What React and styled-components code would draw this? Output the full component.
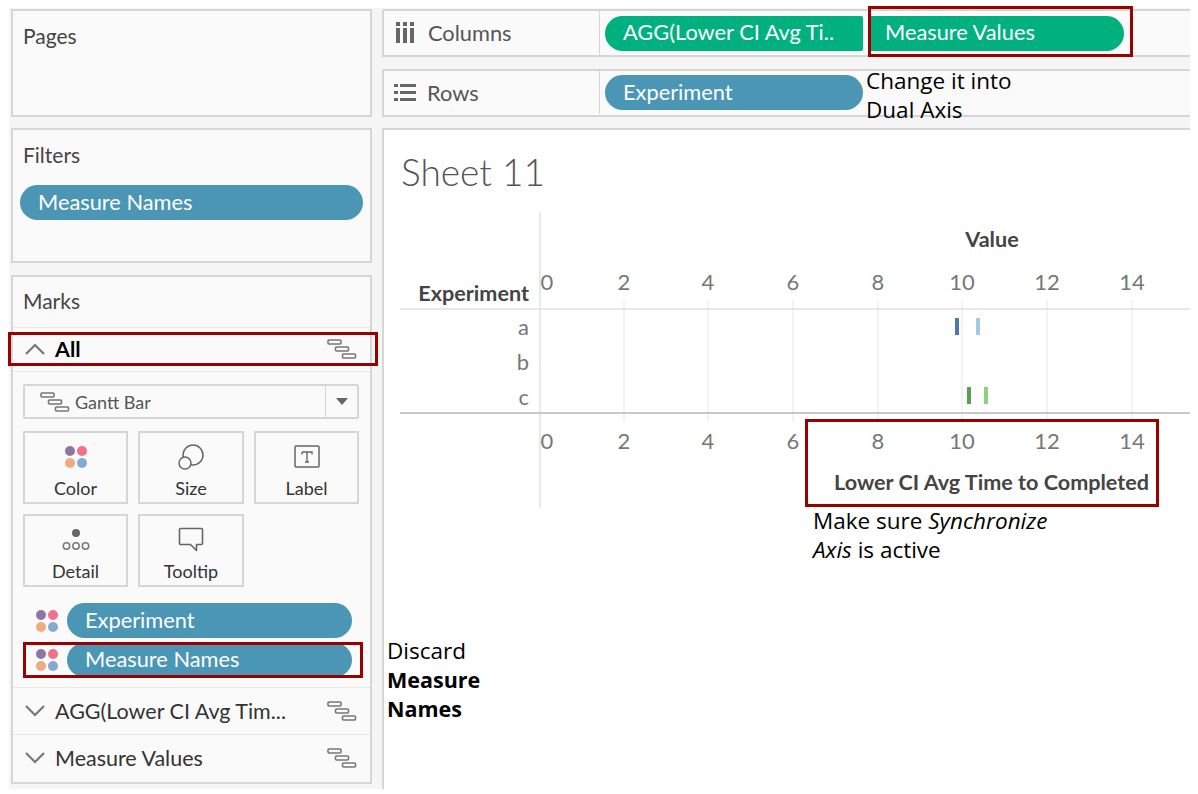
import styled, { createGlobalStyle } from 'styled-components';

const Global = createGlobalStyle`
  html, body { margin: 0; padding: 0; background: #fff; }
  body { font-family: Lato, "Open Sans", sans-serif; }
`;

const Page = styled.div`
  position: relative;
  width: 1198px;
  height: 794px;
  overflow: hidden;
  padding: 8px 8px 5px 9px;
  box-sizing: border-box;
`;

const Shell = styled.div`
  display: grid;
  grid-template-columns: 373px 1fr;
  height: 100%;
  background: #f5f5f5;
`;

const Side = styled.div`
  display: flex;
  flex-direction: column;
  padding: 1px 10px 0 2px;
`;

const Panel = styled.section`
  box-sizing: border-box;
  height: ${p => p.$h}px;
  margin-bottom: ${p => p.$mb || 0}px;
  background: #fafafa;
  border: 2px solid #d6d6d6;
`;

const PanelTitle = styled.div`
  padding: ${p => p.$pt}px 0 0 10px;
  font-size: 21px;
  line-height: 26px;
  color: #444;
`;

const Pill = styled.div`
  box-sizing: border-box;
  display: flex;
  align-items: center;
  height: ${p => p.$h || 35}px;
  width: ${p => p.$w}px;
  padding: 0 0 3px ${p => p.$pl || 18}px;
  border-radius: ${p => p.$radius || '18px'};
  background: ${p => p.$bg || '#4a96b4'};
  color: #fff;
  font-size: 21.8px;
  white-space: nowrap;
`;

const FilterPill = styled(Pill)`
  margin: 17px 0 0 7px;
`;

const MarkRow = styled.div`
  box-sizing: border-box;
  display: flex;
  align-items: center;
  height: ${p => p.$h}px;
  margin-top: ${p => p.$mt || 0}px;
  padding: 0 13px ${p => p.$pb || 0}px 11px;
  border-top: 1px solid #e8e8e8;
  font-size: 21.5px;
  font-weight: ${p => (p.$bold ? 700 : 400)};
  color: ${p => (p.$bold ? '#000' : '#333')};
`;

const RowLabel = styled.span`
  flex: 1;
  margin-left: 9px;
  white-space: nowrap;
`;

const MarksBody = styled.div`
  height: 316px;
  border-top: 1px solid #e8e8e8;
  padding: 12px 11px 0 10px;
  box-sizing: border-box;
`;

const Select = styled.div`
  box-sizing: border-box;
  display: flex;
  align-items: center;
  height: 35px;
  width: 336px;
  background: #fafafa;
  border: 2px solid #d6d6d6;
  border-radius: 2px;
  font-size: 18px;
  color: #555;
`;

const SelectLabel = styled.div`
  flex: 1;
  display: flex;
  align-items: center;
  gap: 5px;
  padding-left: 15px;
`;

const SelectArrow = styled.div`
  display: flex;
  align-items: center;
  justify-content: center;
  width: 31px;
  height: 100%;
  border-left: 1px solid #d6d6d6;

  &::after {
    content: '';
    border-left: 6px solid transparent;
    border-right: 6px solid transparent;
    border-top: 7px solid #666;
  }
`;

const CardGrid = styled.div`
  display: grid;
  grid-template-columns: 105px 106px 105px;
  grid-auto-rows: 73px;
  column-gap: 10px;
  row-gap: 10px;
  margin-top: 12px;
`;

const Card = styled.div`
  box-sizing: border-box;
  display: flex;
  flex-direction: column;
  align-items: center;
  padding-top: 9px;
  border: 2px solid #d6d6d6;
  font-size: 18px;
  color: #333;
`;

const CardIcon = styled.div`
  height: 30px;
  margin-bottom: 5px;
  display: flex;
  align-items: center;
`;

const FieldList = styled.div`
  display: flex;
  flex-direction: column;
  gap: 5px;
  margin-top: 16px;
  padding-left: 13px;
`;

const Field = styled.div`
  display: flex;
  align-items: center;
  gap: 9px;
`;

const Main = styled.div`
  display: flex;
  flex-direction: column;
  padding-top: 1px;
`;

const Shelf = styled.div`
  box-sizing: border-box;
  display: flex;
  align-items: center;
  height: 48px;
  margin-bottom: ${p => p.$mb}px;
  padding-bottom: ${p => p.$pb || 0}px;
  background: #fafafa;
  border: 2px solid #d6d6d6;
  border-right: 0;
`;

const ShelfName = styled.div`
  box-sizing: border-box;
  display: flex;
  align-items: center;
  gap: ${p => p.$gap}px;
  width: 216px;
  height: 100%;
  padding-left: ${p => p.$pl}px;
  padding-bottom: 1px;
  border-right: 1px solid #d6d6d6;
  font-size: 21.8px;
  color: #555;
`;

const ShelfPills = styled.div`
  display: flex;
  gap: 5px;
  padding-left: 5px;
`;

const Sheet = styled.div`
  flex: 1;
  background: #fff;
  border-top: 2px solid #d6d6d6;
  border-left: 2px solid #d6d6d6;
`;

const SheetTitle = styled.h1`
  height: 82px;
  margin: 0;
  padding: 20px 0 0 17px;
  box-sizing: border-box;
  font-size: 37px;
  line-height: 44px;
  font-weight: 300;
  color: #555;
`;

const ChartSvg = styled.svg`
  display: block;
  font-family: Lato, "Open Sans", sans-serif;
`;

const Tick = styled.text`
  font-size: 22px;
  fill: #777;
  text-anchor: ${p => p.$anchor || 'middle'};
`;

const AxisTitle = styled.text`
  font-size: 21.6px;
  font-weight: 700;
  fill: #444;
  text-anchor: ${p => p.$anchor || 'middle'};
`;

const Highlight = styled.div`
  position: absolute;
  box-sizing: border-box;
  left: ${p => p.$x}px;
  top: ${p => p.$y}px;
  width: ${p => p.$w}px;
  height: ${p => p.$h}px;
  border: 3px solid #990000;
  pointer-events: none;
`;

const Note = styled.div`
  position: absolute;
  left: ${p => p.$x}px;
  top: ${p => p.$y}px;
  width: ${p => p.$w}px;
  font-family: "Open Sans", Lato, sans-serif;
  font-size: 22.5px;
  line-height: 29px;
  color: #000;

  strong {
    font-size: 21.5px;
  }
`;

const Chevron = ({ up }) => (
  <svg width="22" height="14" viewBox="0 0 22 14" fill="none" stroke="#777" strokeWidth="2.2">
    <path d={up ? 'M2 12 11 3l9 9' : 'M2 2l9 9 9-9'} />
  </svg>
);

const GanttIcon = () => (
  <svg width="30" height="20" viewBox="0 0 30 20" fill="none" stroke="#777" strokeWidth="1.6">
    <rect x="1" y="1" width="13" height="4" rx="1" />
    <rect x="8.5" y="8" width="13" height="4" rx="1" />
    <rect x="15.5" y="15" width="13" height="4" rx="1" />
  </svg>
);

const ColorDots = ({ size = 22 }) => (
  <svg width={size} height={size} viewBox="0 0 22 22">
    <circle cx="5" cy="5" r="5" fill="#8f76a0" />
    <circle cx="17" cy="5" r="5" fill="#f2708a" />
    <circle cx="5" cy="17" r="5" fill="#f2ab7e" />
    <circle cx="17" cy="17" r="5" fill="#85a9d0" />
  </svg>
);

const SizeIcon = () => (
  <svg width="26" height="26" viewBox="0 0 26 26" fill="none" stroke="#666" strokeWidth="1.5">
    <circle cx="15" cy="11" r="10" />
    <circle cx="7" cy="19" r="6" fill="#fafafa" />
  </svg>
);

const LabelIcon = () => (
  <svg width="26" height="24" viewBox="0 0 26 24" fill="none">
    <rect x="1" y="1" width="24" height="21" rx="1" stroke="#666" strokeWidth="1.5" />
    <path d="M8 7h10v2.5M8 7v2.5M13 7v10M11 17h4" stroke="#666" strokeWidth="1.4" />
  </svg>
);

const DetailIcon = () => (
  <svg width="28" height="24" viewBox="0 0 28 24" fill="none" stroke="#777" strokeWidth="1.5">
    <circle cx="14" cy="5" r="4" fill="#666" stroke="none" />
    <circle cx="4.5" cy="18" r="3.2" />
    <circle cx="14" cy="18" r="3.2" />
    <circle cx="23.5" cy="18" r="3.2" />
  </svg>
);

const TooltipIcon = () => (
  <svg width="26" height="26" viewBox="0 0 26 26" fill="none" stroke="#666" strokeWidth="1.6" strokeLinejoin="round">
    <path d="M2.5 1.5h21a1 1 0 0 1 1 1v14a1 1 0 0 1-1 1h-5v6l-6-6h-10a1 1 0 0 1-1-1v-14a1 1 0 0 1 1-1z" />
  </svg>
);

const ColumnsIcon = () => (
  <svg width="19" height="21" viewBox="0 0 19 21" fill="#666">
    <rect x="0" y="0" width="4" height="4" />
    <rect x="7" y="0" width="4" height="4" />
    <rect x="14" y="0" width="4" height="4" />
    <rect x="0" y="6" width="4" height="15" />
    <rect x="7" y="6" width="4" height="15" />
    <rect x="14" y="6" width="4" height="15" />
  </svg>
);

const RowsIcon = () => (
  <svg width="22" height="17" viewBox="0 0 22 17" fill="#666">
    <rect x="0" y="0" width="4" height="3" />
    <rect x="6" y="0" width="16" height="3" />
    <rect x="0" y="7" width="4" height="3" />
    <rect x="6" y="7" width="16" height="3" />
    <rect x="0" y="14" width="4" height="3" />
    <rect x="6" y="14" width="16" height="3" />
  </svg>
);

const gridX = [624, 708, 793, 878, 962, 1047, 1132];
const tickLabels = [
  { x: 547, label: '0' },
  ...gridX.map((x, i) => ({ x, label: String((i + 1) * 2) })),
];

const bars = [
  { x: 955, y: 318, fill: '#4e79a7' },
  { x: 976, y: 318, fill: '#a0cbe8' },
  { x: 967, y: 387, fill: '#59a14f' },
  { x: 984, y: 387, fill: '#8cd17d' },
];

const Chart = () => (
  <ChartSvg width="806" height="300" viewBox="384 212 806 300">
    {gridX.map(x => (
      <line key={x} x1={x} x2={x} y1="300" y2="422" stroke="#efefef" strokeWidth="1.5" />
    ))}
    <line x1="540" x2="540" y1="212" y2="508" stroke="#e2e2e2" strokeWidth="1.5" />
    <line x1="400" x2="1190" y1="309" y2="309" stroke="#e0e0e0" strokeWidth="1.5" />
    <line x1="400" x2="1190" y1="413" y2="413" stroke="#c8c8c8" strokeWidth="2" />
    <AxisTitle x="992" y="247">Value</AxisTitle>
    <AxisTitle x="529" y="301" $anchor="end">Experiment</AxisTitle>
    {tickLabels.map(t => (
      <Tick key={t.label} x={t.x} y="290">{t.label}</Tick>
    ))}
    {tickLabels.map(t => (
      <Tick key={t.label} x={t.x} y="449">{t.label}</Tick>
    ))}
    <Tick x="529" y="335" $anchor="end">a</Tick>
    <Tick x="529" y="370" $anchor="end">b</Tick>
    <Tick x="529" y="405" $anchor="end">c</Tick>
    {bars.map(b => (
      <rect key={b.x} x={b.x} y={b.y} width="4" height="17" fill={b.fill} />
    ))}
    <AxisTitle x="1149" y="490" $anchor="end">Lower CI Avg Time to Completed</AxisTitle>
  </ChartSvg>
);

const App = () => (
  <Page>
    <Global />
    <Shell>
      <Side>
        <Panel $h={108} $mb={11}>
          <PanelTitle $pt={12}>Pages</PanelTitle>
        </Panel>
        <Panel $h={135} $mb={12}>
          <PanelTitle $pt={12}>Filters</PanelTitle>
          <FilterPill $w={343}>Measure Names</FilterPill>
        </Panel>
        <Panel $h={509}>
          <PanelTitle $pt={11}>Marks</PanelTitle>
          <MarkRow $h={44} $mt={13} $pb={1} $bold>
            <Chevron up />
            <RowLabel>All</RowLabel>
            <GanttIcon />
          </MarkRow>
          <MarksBody>
            <Select>
              <SelectLabel><GanttIcon />Gantt Bar</SelectLabel>
              <SelectArrow />
            </Select>
            <CardGrid>
              <Card><CardIcon><ColorDots /></CardIcon>Color</Card>
              <Card><CardIcon><SizeIcon /></CardIcon>Size</Card>
              <Card><CardIcon><LabelIcon /></CardIcon>Label</Card>
              <Card><CardIcon><DetailIcon /></CardIcon>Detail</Card>
              <Card><CardIcon><TooltipIcon /></CardIcon>Tooltip</Card>
            </CardGrid>
            <FieldList>
              <Field><ColorDots /><Pill $w={285}>Experiment</Pill></Field>
              <Field><ColorDots /><Pill $w={285} $h={34}>Measure Names</Pill></Field>
            </FieldList>
          </MarksBody>
          <MarkRow $h={47}>
            <Chevron />
            <RowLabel>AGG(Lower CI Avg Tim...</RowLabel>
            <GanttIcon />
          </MarkRow>
          <MarkRow $h={47}>
            <Chevron />
            <RowLabel>Measure Values</RowLabel>
            <GanttIcon />
          </MarkRow>
        </Panel>
      </Side>
      <Main>
        <Shelf $mb={12}>
          <ShelfName $pl={12} $gap={13}><ColumnsIcon />Columns</ShelfName>
          <ShelfPills>
            <Pill $w={258} $bg="#00b180" $radius="18px 2px 2px 18px">AGG(Lower CI Avg Ti..</Pill>
            <Pill $w={256} $bg="#00b180" $pl={17} $radius="2px 18px 18px 2px">Measure Values</Pill>
          </ShelfPills>
        </Shelf>
        <Shelf $mb={11} $pb={1}>
          <ShelfName $pl={10} $gap={11}><RowsIcon />Rows</ShelfName>
          <ShelfPills>
            <Pill $w={258}>Experiment</Pill>
          </ShelfPills>
        </Shelf>
        <Sheet>
          <SheetTitle>Sheet 11</SheetTitle>
          <Chart />
        </Sheet>
      </Main>
    </Shell>

    <Highlight $x={868} $y={6} $w={265} $h={51} />
    <Highlight $x={8} $y={332} $w={370} $h={34} />
    <Highlight $x={23} $y={642} $w={340} $h={36} />
    <Highlight $x={805} $y={419} $w={354} $h={88} />

    <Note $x={866} $y={66} $w={200}>Change it into<br />Dual Axis</Note>
    <Note $x={813} $y={506} $w={300}>Make sure <em>Synchronize</em><br /><em>Axis</em> is active</Note>
    <Note $x={387} $y={636} $w={110}>Discard<br /><strong>Measure<br />Names</strong></Note>
  </Page>
);

export default App;
